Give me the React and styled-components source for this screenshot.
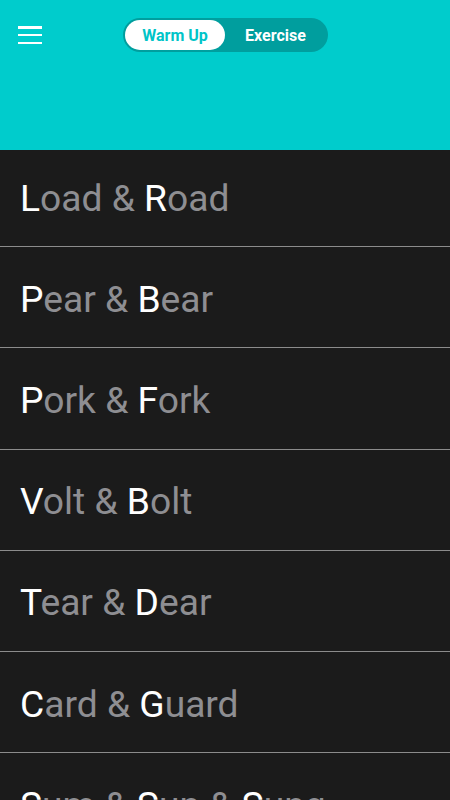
import React, { useState } from "react";
import styled, { createGlobalStyle } from "styled-components";

const GlobalStyle = createGlobalStyle`
  html, body {
    margin: 0;
    padding: 0;
    background: #1b1b1b;
    font-family: Roboto, "Noto Sans", sans-serif;
    overflow: hidden;
  }
`;

const Page = styled.div`
  width: 450px;
  height: 800px;
  background: #1b1b1b;
  overflow: hidden;
`;

const Header = styled.header`
  position: relative;
  z-index: 2;
  height: 150px;
  background: #00cccc;
  display: grid;
  grid-template-columns: 1fr auto 1fr;
  align-items: start;
  padding-top: 18px;
  box-sizing: border-box;
`;

const MenuBtn = styled.button`
  justify-self: start;
  margin: 8px 0 0 18px;
  width: 24px;
  height: 18px;
  padding: 0;
  border: none;
  background: transparent;
  display: flex;
  flex-direction: column;
  justify-content: space-between;
  cursor: pointer;
`;

const MenuLine = styled.span`
  display: block;
  height: 2.5px;
  background: #fff;
`;

const Toggle = styled.div`
  display: flex;
  align-items: center;
  height: 34px;
  padding: 2px;
  box-sizing: border-box;
  border-radius: 17px;
  background: #009e9e;
  margin-left: 1px;
`;

const ToggleBtn = styled.button`
  height: 30px;
  width: ${(p) => p.$w}px;
  border: none;
  border-radius: 15px;
  padding: 0;
  font-family: Roboto, sans-serif;
  font-weight: 700;
  font-size: 16px;
  background: ${(p) => (p.$active ? "#fff" : "transparent")};
  color: ${(p) => (p.$active ? "#00c4c8" : "#fff")};
  cursor: pointer;
`;

const List = styled.ul`
  list-style: none;
  margin: -4px 0 0;
  padding: 0;
`;

const Row = styled.li`
  height: 101.2px;
  box-sizing: border-box;
  border-bottom: 1px solid #8c8c8c;
  display: flex;
  align-items: center;
  padding: 3px 0 0 20px;
  font-size: 37.2px;
  color: #8e8e92;
  white-space: pre;
`;

const Cap = styled.span`
  color: #fff;
`;

const pairs = [
  ["Load", "Road"],
  ["Pear", "Bear"],
  ["Pork", "Fork"],
  ["Volt", "Bolt"],
  ["Tear", "Dear"],
  ["Card", "Guard"],
  ["Sum", "Sun", "Sung"],
];

const Word = ({ w }) => (
  <>
    <Cap>{w[0]}</Cap>
    {w.slice(1)}
  </>
);

export default function App() {
  const [tab, setTab] = useState("warm");
  return (
    <Page>
      <GlobalStyle />
      <Header>
        <MenuBtn aria-label="menu">
          <MenuLine />
          <MenuLine />
          <MenuLine />
        </MenuBtn>
        <Toggle>
          <ToggleBtn $w={100} $active={tab === "warm"} onClick={() => setTab("warm")}>
            Warm Up
          </ToggleBtn>
          <ToggleBtn $w={101} $active={tab === "ex"} onClick={() => setTab("ex")}>
            Exercise
          </ToggleBtn>
        </Toggle>
      </Header>
      <List>
        {pairs.map((p) => (
          <Row key={p.join()}>
            <span>
              {p.map((w, i) => (
                <React.Fragment key={w}>
                  {i > 0 && " & "}
                  <Word w={w} />
                </React.Fragment>
              ))}
            </span>
          </Row>
        ))}
      </List>
    </Page>
  );
}
